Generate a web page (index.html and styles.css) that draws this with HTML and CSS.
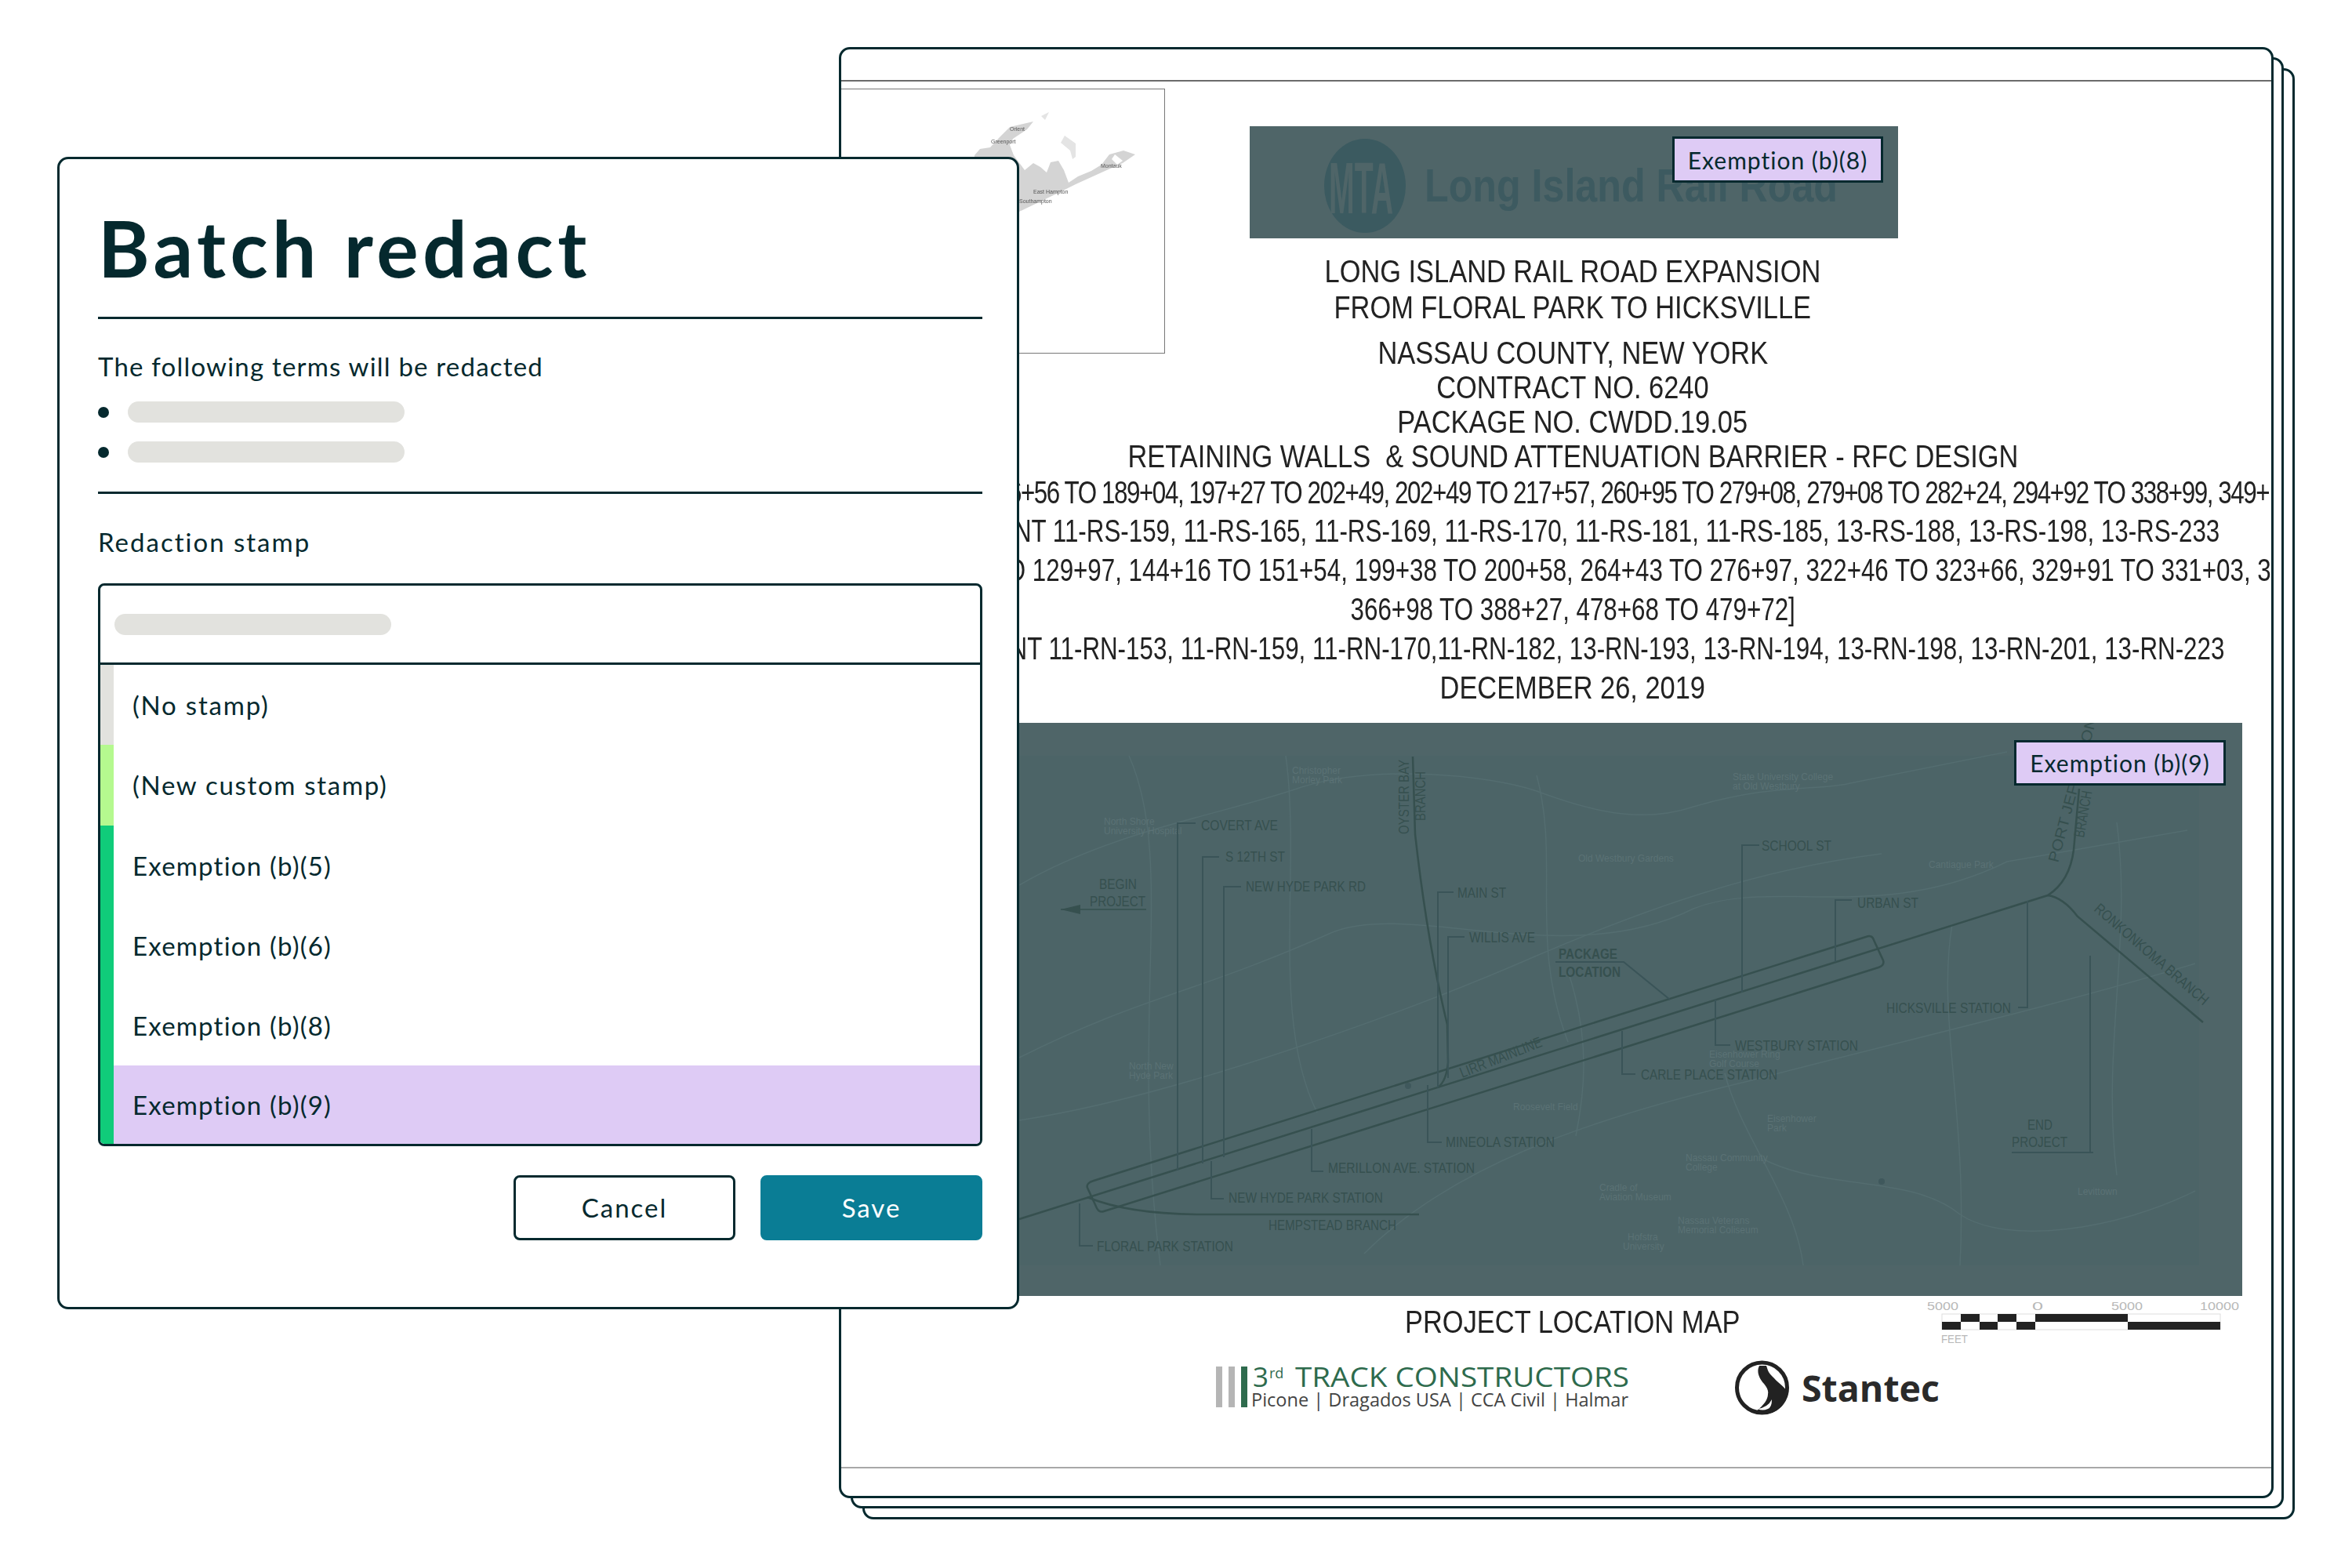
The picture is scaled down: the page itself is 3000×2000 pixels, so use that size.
FILE: index.html
```html
<!DOCTYPE html>
<html lang="en">
<head>
    <meta charset="UTF-8">
    <title>Batch redact</title>
    <link rel="stylesheet" href="styles.css">
</head>
<body>
    <div class="sheet sheet-back-2"></div>
    <div class="sheet sheet-back-1"></div>

    <div class="sheet sheet-front">
        <div class="sheet-head"></div>

        <svg class="inset" viewBox="1073 113 413 338">
            <rect class="inset-frame" x="1040" y="113" width="446" height="338"/>
            <g class="inset-blur">
                <path class="inset-land" d="M1243 198 L1250 190 L1263 188 L1275 175 L1288 162 L1305 158 L1318 155 L1310 165 L1292 177 L1288 185 L1293 198 L1307 217 L1318 208 L1327 213 L1335 220 L1340 207 L1350 205 L1357 217 L1363 233 L1375 225 L1392 218 L1405 210 L1415 197 L1433 192 L1448 197 L1432 208 L1405 220 L1372 235 L1352 245 L1300 270 L1240 290 Z"/>
                <path class="inset-land-white" d="M1422 197 L1432 205 L1425 210 L1418 203 Z"/>
                <path class="inset-land-pale" d="M1353 182 L1358 173 L1372 183 L1372 200 L1368 203 L1365 192 Z M1328 148 L1338 143 L1333 153 Z"/>
                <text class="inset-name" x="1288" y="167">Orient</text>
                <text class="inset-name" x="1264" y="183">Greenport</text>
                <text class="inset-name" x="1404" y="214">Montauk</text>
                <text class="inset-name" x="1318" y="247">East Hampton</text>
                <text class="inset-name" x="1300" y="259">Southampton</text>
            </g>
        </svg>

        <div class="doc-logo">
            <svg class="doc-logo-art" viewBox="1594 161 827 143">
                <ellipse class="mta-disc" cx="1741" cy="237" rx="52" ry="60"/>
                <text class="mta-mark" x="1695" y="272" textLength="82" lengthAdjust="spacingAndGlyphs">MTA</text>
                <text class="mta-name" x="1817" y="257" textLength="527" lengthAdjust="spacingAndGlyphs">Long Island Rail Road</text>
            </svg>
            <div class="stamp stamp-logo">Exemption (b)(8)</div>
        </div>

        <div class="doc-lines">
            <div class="line line-46"><span>LONG ISLAND RAIL ROAD EXPANSION</span></div>
            <div class="line line-46 line-gap"><span>FROM FLORAL PARK TO HICKSVILLE</span></div>
            <div class="line line-44"><span>NASSAU COUNTY, NEW YORK</span></div>
            <div class="line line-44"><span>CONTRACT NO. 6240</span></div>
            <div class="line line-44"><span>PACKAGE NO. CWDD.19.05</span></div>
            <div class="line line-44"><span>RETAINING WALLS &nbsp;&amp; SOUND ATTENUATION BARRIER - RFC DESIGN</span></div>
            <div class="line line-48 line-tight line-squeezed"><span>[STATION 176+56 TO 189+04, 197+27 TO 202+49, 202+49 TO 217+57, 260+95 TO 279+08, 279+08 TO 282+24, 294+92 TO 338+99, 349+</span></div>
            <div class="line line-50 line-tight"><span>SEGMENT 11-RS-159, 11-RS-165, 11-RS-169, 11-RS-170, 11-RS-181, 11-RS-185, 13-RS-188, 13-RS-198, 13-RS-233</span></div>
            <div class="line line-50 line-tight"><span>[STA 112+04 TO 129+97, 144+16 TO 151+54, 199+38 TO 200+58, 264+43 TO 276+97, 322+46 TO 323+66, 329+91 TO 331+03, 39+</span></div>
            <div class="line line-50 line-tight"><span>366+98 TO 388+27, 478+68 TO 479+72]</span></div>
            <div class="line line-50 line-tight"><span>SEGMENT 11-RN-153, 11-RN-159, 11-RN-170,11-RN-182, 13-RN-193, 13-RN-194, 13-RN-198, 13-RN-201, 13-RN-223</span></div>
            <div class="line line-50"><span>DECEMBER 26, 2019</span></div>
        </div>

        <div class="doc-map">
            <svg class="doc-map-art" viewBox="1110 923 1750 731">
                <rect class="map-inner" x="1110" y="965" width="1695" height="650"/>

                <!-- faint base map -->
                <path class="road" d="M1300 1130 C1420 1060 1560 1040 1660 1005 C1760 975 1900 990 1960 1010 C2040 1040 2100 1050 2160 1030 C2260 1000 2320 1010 2360 1000 L2560 960"/>
                <path class="road" d="M1300 1350 C1460 1270 1520 1270 1700 1190 C1800 1150 2000 1240 2160 1160 C2260 1120 2400 1180 2560 1100 L2790 1060"/>
                <path class="road" d="M1300 1430 C1500 1400 1800 1290 1960 1220 C2100 1160 2240 1110 2400 1090"/>
                <path class="road" d="M1740 1600 C1850 1490 2020 1430 2230 1380 C2420 1330 2600 1290 2800 1230"/>
                <path class="road" d="M2250 1480 C2330 1520 2440 1500 2500 1550 C2560 1590 2700 1570 2800 1520"/>
                <path class="road" d="M2000 1240 C2030 1330 2020 1400 2010 1450 M2200 1370 C2220 1450 2290 1530 2300 1615 M2490 1180 C2470 1300 2510 1420 2500 1615 M2700 1050 C2720 1200 2680 1340 2700 1500"/>
                <path class="road" d="M1440 965 C1500 1100 1440 1300 1480 1615 M1640 965 C1660 1110 1620 1300 1680 1420 M1960 990 C1990 1100 1950 1200 2000 1330"/>
                <text class="place" x="1408" y="1053">North Shore</text>
                <text class="place" x="1408" y="1065">University Hospital</text>
                <text class="place" x="1648" y="988">Christopher</text>
                <text class="place" x="1648" y="1000">Morley Park</text>
                <text class="place" x="2013" y="1100">Old Westbury Gardens</text>
                <text class="place" x="2210" y="996">State University College</text>
                <text class="place" x="2210" y="1008">at Old Westbury</text>
                <text class="place" x="2460" y="1108">Cantiague Park</text>
                <text class="place" x="2180" y="1350">Eisenhower Ring</text>
                <text class="place" x="2180" y="1362">Golf Course</text>
                <text class="place" x="1930" y="1417">Roosevelt Field</text>
                <text class="place" x="1440" y="1365">North New</text>
                <text class="place" x="1440" y="1377">Hyde Park</text>
                <text class="place" x="2254" y="1432">Eisenhower</text>
                <text class="place" x="2254" y="1444">Park</text>
                <text class="place" x="2150" y="1482">Nassau Community</text>
                <text class="place" x="2150" y="1494">College</text>
                <text class="place" x="2040" y="1520">Cradle of</text>
                <text class="place" x="2040" y="1532">Aviation Museum</text>
                <text class="place" x="2140" y="1562">Nassau Veterans</text>
                <text class="place" x="2140" y="1574">Memorial Coliseum</text>
                <text class="place" x="2076" y="1583">Hofstra</text>
                <text class="place" x="2070" y="1595">University</text>
                <text class="place" x="2650" y="1525">Levittown</text>
                <circle class="place-dot" cx="2400" cy="1508" r="4"/>
                <circle class="place-dot" cx="1796" cy="1386" r="4"/>

                <!-- corridor and rail lines -->
                <path class="rail" d="M1395 1507 L2380 1196 Q2388 1193 2390 1200 L2402 1226 Q2404 1232 2396 1235 L1408 1546 Q1402 1548 1399 1542 L1387 1516 Q1385 1510 1395 1507 Z"/>
                <path class="rail" d="M1300 1556 L2612 1143 Q2640 1125 2645 1085 L2652 1007"/>
                <path class="rail" d="M2612 1143 Q2632 1146 2650 1170 L2810 1305"/>
                <path class="rail" d="M1802 966 L1805 1065 Q1820 1200 1846 1308 L1847 1356 Q1845 1380 1834 1388"/>
                <path class="rail" d="M1387 1528 Q1440 1550 1535 1550 L1810 1550"/>
                <path class="rail rail-thin" d="M1353 1161 L1462 1161"/>
                <path class="arrow" d="M1353 1161 L1378 1155 L1378 1167 Z"/>

                <!-- leaders -->
                <path class="leader" d="M1502 1494 V1051 H1525 M1534 1485 V1094 H1555 M1561 1477 V1132 H1583 M1834 1388 V1139 H1854 M1847 1376 V1196 H1868"/>
                <path class="leader" d="M1984 1228 H2071 L2130 1276 M2222 1267 V1079 H2244 M2341 1228 V1149 H2362 M2574 1286 H2586 V1150"/>
                <path class="leader" d="M2188 1276 V1334 H2207 M2069 1316 V1371 H2086 M1821 1385 V1458 H1839 M1673 1441 V1495 H1688 M1545 1482 V1530 H1561 M1377 1536 V1590 H1394"/>
                <path class="leader" d="M2566 1471 H2670 M2666 1220 V1471"/>

                <!-- labels -->
                <text class="label" x="1532" y="1060" textLength="98" lengthAdjust="spacingAndGlyphs">COVERT AVE</text>
                <text class="label" x="1563" y="1100" textLength="76" lengthAdjust="spacingAndGlyphs">S 12TH ST</text>
                <text class="label" x="1589" y="1138" textLength="153" lengthAdjust="spacingAndGlyphs">NEW HYDE PARK RD</text>
                <text class="label" x="1402" y="1135" textLength="48" lengthAdjust="spacingAndGlyphs">BEGIN</text>
                <text class="label" x="1390" y="1157" textLength="71" lengthAdjust="spacingAndGlyphs">PROJECT</text>
                <text class="label" transform="translate(1797 1065) rotate(-90)" textLength="95" lengthAdjust="spacingAndGlyphs">OYSTER BAY</text>
                <text class="label" transform="translate(1818 1048) rotate(-90)" textLength="63" lengthAdjust="spacingAndGlyphs">BRANCH</text>
                <text class="label" x="1859" y="1146" textLength="62" lengthAdjust="spacingAndGlyphs">MAIN ST</text>
                <text class="label" x="1874" y="1203" textLength="84" lengthAdjust="spacingAndGlyphs">WILLIS AVE</text>
                <text class="label label-bold" x="1988" y="1224" textLength="75" lengthAdjust="spacingAndGlyphs">PACKAGE</text>
                <text class="label label-bold" x="1988" y="1247" textLength="79" lengthAdjust="spacingAndGlyphs">LOCATION</text>
                <text class="label" x="2247" y="1086" textLength="89" lengthAdjust="spacingAndGlyphs">SCHOOL ST</text>
                <text class="label" x="2369" y="1159" textLength="78" lengthAdjust="spacingAndGlyphs">URBAN ST</text>
                <text class="label" x="2406" y="1293" textLength="159" lengthAdjust="spacingAndGlyphs">HICKSVILLE STATION</text>
                <text class="label" x="2213" y="1341" textLength="157" lengthAdjust="spacingAndGlyphs">WESTBURY STATION</text>
                <text class="label" x="2093" y="1378" textLength="174" lengthAdjust="spacingAndGlyphs">CARLE PLACE STATION</text>
                <text class="label" x="1844" y="1464" textLength="139" lengthAdjust="spacingAndGlyphs">MINEOLA STATION</text>
                <text class="label" x="1694" y="1497" textLength="187" lengthAdjust="spacingAndGlyphs">MERILLON AVE. STATION</text>
                <text class="label" x="1567" y="1535" textLength="197" lengthAdjust="spacingAndGlyphs">NEW HYDE PARK STATION</text>
                <text class="label" x="1618" y="1570" textLength="163" lengthAdjust="spacingAndGlyphs">HEMPSTEAD BRANCH</text>
                <text class="label" x="1399" y="1597" textLength="174" lengthAdjust="spacingAndGlyphs">FLORAL PARK STATION</text>
                <text class="label" x="2586" y="1442" textLength="32" lengthAdjust="spacingAndGlyphs">END</text>
                <text class="label" x="2566" y="1464" textLength="71" lengthAdjust="spacingAndGlyphs">PROJECT</text>
                <text class="label" transform="translate(1865 1376) rotate(-21.5)" textLength="111" lengthAdjust="spacingAndGlyphs">LIRR MAINLINE</text>
                <text class="label" transform="translate(2625 1102) rotate(-75)" textLength="190" lengthAdjust="spacingAndGlyphs">PORT JEFFERSON</text>
                <text class="label" transform="translate(2658 1070) rotate(-80)" textLength="60" lengthAdjust="spacingAndGlyphs">BRANCH</text>
                <text class="label" transform="translate(2670 1162) rotate(41)" textLength="186" lengthAdjust="spacingAndGlyphs">RONKONKOMA BRANCH</text>
            </svg>
            <div class="stamp stamp-map">Exemption (b)(9)</div>
        </div>

        <div class="doc-caption">
            <span class="caption-text">PROJECT LOCATION MAP</span>
            <svg class="scale-bar" viewBox="2458 1656 402 64">
                <text class="scale-num" x="2458" y="1672" textLength="40" lengthAdjust="spacingAndGlyphs">5000</text>
                <text class="scale-num" x="2592" y="1672" textLength="14" lengthAdjust="spacingAndGlyphs">0</text>
                <text class="scale-num" x="2693" y="1672" textLength="40" lengthAdjust="spacingAndGlyphs">5000</text>
                <text class="scale-num" x="2806" y="1672" textLength="50" lengthAdjust="spacingAndGlyphs">10000</text>
                <rect class="scale-frame" x="2477" y="1677" width="355" height="20"/>
                <path class="scale-fill" d="M2477 1687 h24 v10 h-24 Z M2501 1677 h24 v10 h-24 Z M2525 1687 h23 v10 h-23 Z M2548 1677 h24 v10 h-24 Z M2572 1687 h24 v10 h-24 Z M2596 1677 h118 v10 h-118 Z M2714 1687 h118 v10 h-118 Z"/>
                <text class="scale-num" x="2476" y="1714" textLength="34" lengthAdjust="spacingAndGlyphs">FEET</text>
            </svg>
        </div>

        <div class="doc-logos">
            <svg class="partner-logos" viewBox="1551 1737 930 72">
                <rect class="bar-grey" x="1551" y="1745" width="8" height="52"/>
                <rect class="bar-grey" x="1567" y="1745" width="8" height="52"/>
                <rect class="bar-green" x="1583" y="1745" width="8" height="52"/>
                <text class="track-name" x="1598" y="1771">3</text>
                <text class="track-sup" x="1619" y="1760">rd</text>
                <text class="track-name" x="1652" y="1771" textLength="426" lengthAdjust="spacingAndGlyphs">TRACK CONSTRUCTORS</text>
                <text class="track-sub" x="1596" y="1796" textLength="481" lengthAdjust="spacingAndGlyphs">Picone | Dragados USA | CCA Civil | Halmar</text>
                <circle class="stantec-ring" cx="2247.5" cy="1772" r="32"/>
                <path class="stantec-s" d="M2244 1744 C2240 1752 2244 1760 2250 1767 C2254 1772 2256 1776 2255 1780 C2255 1787 2250 1794 2240 1802 L2247 1806 C2262 1806 2274 1798 2277 1788 C2279 1784 2280 1780 2279 1777 C2276 1770 2268 1766 2263 1760 C2259 1756 2256 1753 2255 1750 L2253 1744 Z"/>
                <path class="stantec-cut" d="M2242 1799 Q2255 1797 2260 1787 Q2260 1797 2255 1799 Q2248 1802 2242 1799 Z"/>
                <text class="stantec-name" x="2298" y="1790" textLength="176" lengthAdjust="spacingAndGlyphs">Stantec</text>
            </svg>
        </div>

        <div class="sheet-foot"></div>
    </div>

    <div class="dialog">
        <h1 class="dialog-title">Batch redact</h1>

        <div class="terms">
            <div class="field-label">The following terms will be redacted</div>
            <ul class="term-list">
                <li class="term"><span class="skeleton"></span></li>
                <li class="term"><span class="skeleton"></span></li>
            </ul>
        </div>

        <div class="field-label field-label-stamp">Redaction stamp</div>

        <div class="select">
            <div class="select-head"><span class="skeleton"></span></div>
            <div class="option option-none">(No stamp)</div>
            <div class="option option-new">(New custom stamp)</div>
            <div class="option">Exemption (b)(5)</div>
            <div class="option">Exemption (b)(6)</div>
            <div class="option">Exemption (b)(8)</div>
            <div class="option option-selected">Exemption (b)(9)</div>
        </div>

        <div class="actions">
            <button class="btn btn-cancel">Cancel</button>
            <button class="btn btn-save">Save</button>
        </div>
    </div>
</body>
</html>
```

FILE: styles.css
```css
* {
    box-sizing: border-box;
}
body {
    margin: 0;
    width: 3000px;
    height: 2000px;
    position: relative;
    overflow: hidden;
    background: #fff;
    color: #05292e;
    font-family: 'Lato', 'Open Sans', sans-serif;
}

/* paper stack */
.sheet {
    position: absolute;
    background: #fff;
    border: 3px solid #05292e;
    border-radius: 14px;
}
.sheet-back-2 {
    left: 1100px;
    top: 87px;
    width: 1827px;
    height: 1851px;
}
.sheet-back-1 {
    left: 1085px;
    top: 73px;
    width: 1828px;
    height: 1851px;
}
.sheet-front {
    left: 1070px;
    top: 60px;
    width: 1830px;
    height: 1851px;
    overflow: hidden;
    display: flex;
    flex-direction: column;
    font-family: 'Liberation Sans', Arial, sans-serif;
    color: #222;
}
.sheet-head {
    height: 41px;
    flex: none;
    border-bottom: 2px solid #6b6b6b;
}
.sheet-foot {
    height: 37px;
    margin-top: auto;
    flex: none;
    border-top: 2px solid #a8a8a8;
}

/* locator map in the corner of the drawing */
.inset {
    position: absolute;
    left: 0;
    top: 50px;
    width: 413px;
    height: 338px;
}
.inset-frame {
    fill: #fff;
    stroke: #777;
    stroke-width: 2;
}
.inset-blur {
    filter: blur(0.7px);
}
.inset-land {
    fill: #d4d4d4;
}
.inset-land-white {
    fill: #fff;
}
.inset-land-pale {
    fill: #e4e4e4;
}
.inset-name {
    font: 7px 'Liberation Sans', sans-serif;
    fill: #555;
}

.doc-logo {
    position: relative;
    width: 827px;
    height: 143px;
    margin: 57px 0 0 521px;
    flex: none;
    background: #4f6568;
}
.doc-logo-art {
    display: block;
    width: 100%;
    height: 100%;
}
.mta-disc {
    fill: #3b5a60;
}
.mta-mark {
    font: 700 93px 'Liberation Sans', sans-serif;
    fill: #4f6568;
}
.mta-name {
    font: 700 60px 'Liberation Sans', sans-serif;
    fill: #3d5a60;
}

.stamp {
    position: absolute;
    display: flex;
    align-items: center;
    justify-content: center;
    background: #decbf5;
    border: 3px solid #05292e;
    color: #05292e;
    font-family: 'Lato', sans-serif;
    font-size: 30px;
    letter-spacing: 1px;
    white-space: nowrap;
}
.stamp-logo {
    left: 539px;
    top: 13px;
    width: 269px;
    height: 59px;
}
.stamp-map {
    right: 21px;
    top: 22px;
    width: 270px;
    height: 58px;
}

/* title block */
.doc-lines {
    margin-top: 19px;
    padding-left: 42px;
    flex: none;
}
.line {
    display: flex;
    justify-content: center;
    white-space: nowrap;
    font-size: 40px;
}
.line span {
    flex: none;
    display: block;
    transform: scaleX(0.86);
}
.line-tight span {
    transform: scaleX(0.783);
}
.line-squeezed {
    letter-spacing: -1.8px;
}
.line-46 {
    height: 46px;
    line-height: 46px;
}
.line-gap {
    margin-bottom: 13px;
}
.line-44 {
    height: 44px;
    line-height: 44px;
}
.line-48 {
    height: 48px;
    line-height: 48px;
}
.line-50 {
    height: 50px;
    line-height: 50px;
}

.doc-map {
    position: relative;
    width: 1750px;
    height: 731px;
    margin: 20px 0 0 37px;
    flex: none;
    background: #4f6568;
}
.doc-map-art {
    display: block;
    width: 100%;
    height: 100%;
}
.map-inner {
    fill: #4c6467;
}
.road {
    fill: none;
    stroke: #546d70;
    stroke-width: 1.5;
}
.place {
    font: 12px 'Liberation Sans', sans-serif;
    fill: #5b7275;
}
.place-dot {
    fill: #3f585c;
}
.rail {
    fill: none;
    stroke: #36504f;
    stroke-width: 2.5;
}
.rail-thin {
    stroke-width: 1.5;
}
.arrow {
    fill: #36504f;
}
.leader {
    fill: none;
    stroke: #3a5458;
    stroke-width: 2;
}
.label {
    font: 19px 'Liberation Sans', sans-serif;
    fill: #36504f;
}
.label-bold {
    font-weight: 700;
}

.doc-caption {
    display: flex;
    align-items: flex-start;
    height: 64px;
    flex: none;
}
.caption-text {
    flex: none;
    width: 427px;
    margin: 8px 0 0 719px;
    font-size: 41px;
    line-height: 50px;
    white-space: nowrap;
    transform: scaleX(0.84);
    transform-origin: left center;
}
.scale-bar {
    width: 402px;
    height: 64px;
    margin: 2px 0 0 239px;
    flex: none;
}
.scale-num {
    font: 15px 'Liberation Sans', sans-serif;
    fill: #b8b8b8;
}
.scale-frame {
    fill: #fff;
    stroke: #ddd;
    stroke-width: 1;
}
.scale-fill {
    fill: #222;
}

.doc-logos {
    margin: 18px 0 0 478px;
    flex: none;
}
.partner-logos {
    display: block;
    width: 930px;
    height: 72px;
}
.bar-grey {
    fill: #b5b5b5;
}
.bar-green {
    fill: #2e6b4d;
}
.track-name {
    font: 35px 'Open Sans', sans-serif;
    fill: #2e6b4d;
}
.track-sup {
    font: 18px 'Open Sans', sans-serif;
    fill: #2e6b4d;
}
.track-sub {
    font: 23px 'Open Sans', sans-serif;
    fill: #444;
}
.stantec-ring {
    fill: #fff;
    stroke: #222;
    stroke-width: 5;
}
.stantec-s {
    fill: #222;
}
.stantec-cut {
    fill: #fff;
}
.stantec-name {
    font: 700 46px 'Open Sans', sans-serif;
    fill: #2a2a2a;
}

/* dialog */
.dialog {
    position: absolute;
    left: 73px;
    top: 200px;
    width: 1227px;
    height: 1470px;
    padding: 0 44px 0 49px;
    background: #fff;
    border: 3px solid #05292e;
    border-radius: 14px;
}
.dialog-title {
    margin: 0;
    height: 204px;
    padding-top: 52px;
    border-bottom: 3px solid #05292e;
    font-size: 100px;
    line-height: 120px;
    font-weight: 700;
    letter-spacing: 5.5px;
}
.field-label {
    font-size: 33px;
    line-height: 40px;
    letter-spacing: 1.2px;
}
.terms {
    height: 223px;
    padding-top: 40px;
    border-bottom: 3px solid #05292e;
}
.term-list {
    list-style: none;
    margin: 13px 0 0;
    padding: 0;
}
.term {
    height: 51px;
    display: flex;
    align-items: center;
    gap: 24px;
}
.term::before {
    content: "";
    width: 14px;
    height: 14px;
    border-radius: 50%;
    background: #05292e;
}
.skeleton {
    display: block;
    width: 353px;
    height: 27px;
    border-radius: 14px;
    background: #e2e2de;
}
.field-label-stamp {
    margin: 41px 0 33px;
    letter-spacing: 2px;
}
.select {
    border: 3px solid #05292e;
    border-radius: 8px;
    overflow: hidden;
}
.select-head {
    height: 101px;
    display: flex;
    align-items: center;
    padding-left: 18px;
    border-bottom: 3px solid #05292e;
}
.option {
    height: 102.3px;
    display: flex;
    align-items: center;
    padding-left: 24px;
    border-left: 17px solid #10cc7a;
    font-size: 33px;
    letter-spacing: 1.2px;
}
.option-none {
    border-left-color: #e2e2de;
    letter-spacing: 1.8px;
}
.option-new {
    border-left-color: #b5f98f;
    letter-spacing: 1.7px;
}
.option-selected {
    height: 99.3px;
    background: #decbf5;
}
.actions {
    display: flex;
    justify-content: flex-end;
    gap: 32px;
    margin-top: 37px;
}
.btn {
    width: 283px;
    height: 83px;
    border-radius: 8px;
    font-family: inherit;
    font-size: 33px;
    letter-spacing: 2px;
}
.btn-cancel {
    background: #fff;
    border: 3px solid #05292e;
    color: #05292e;
}
.btn-save {
    background: #0a7d95;
    border: 3px solid #0a7d95;
    color: #fff;
}
```
